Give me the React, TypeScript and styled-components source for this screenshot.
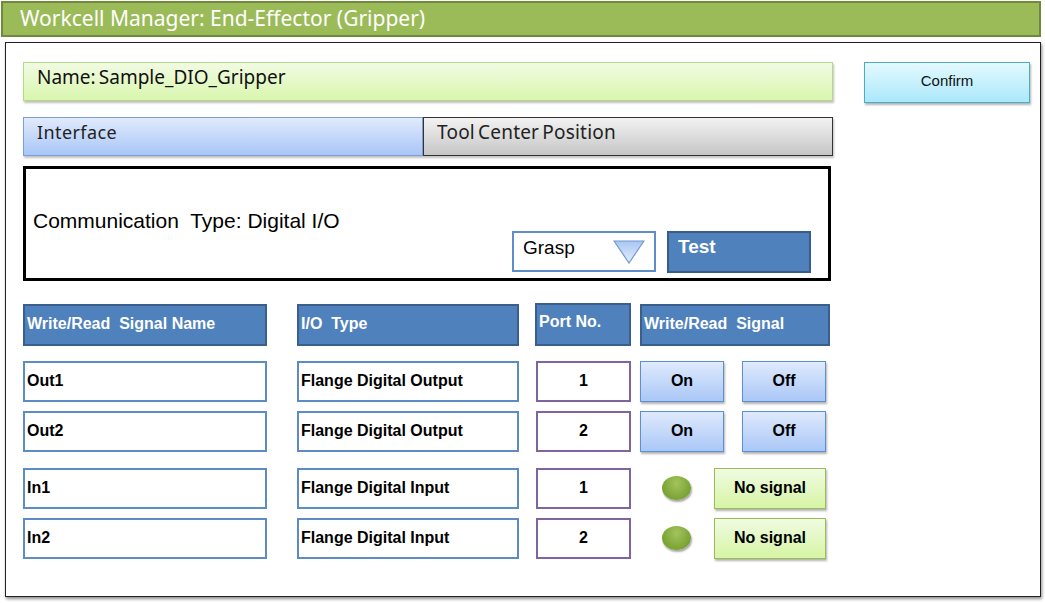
import React from 'react';
import styled, {createGlobalStyle} from 'styled-components';

const GlobalStyle = createGlobalStyle`
  html, body {
    margin: 0;
    padding: 0;
    background: #ffffff;
  }
  * {
    box-sizing: border-box;
  }
`

type SignalRow = {
    name: string
    ioType: string
    port: number
    kind: 'output' | 'input'
}

const rows: SignalRow[] = [
    {name: 'Out1', ioType: 'Flange Digital Output', port: 1, kind: 'output'},
    {name: 'Out2', ioType: 'Flange Digital Output', port: 2, kind: 'output'},
    {name: 'In1', ioType: 'Flange Digital Input', port: 1, kind: 'input'},
    {name: 'In2', ioType: 'Flange Digital Input', port: 2, kind: 'input'},
]

function App() {
    return (
        <Page>
            <GlobalStyle/>
            <TitleBar>Workcell Manager: End-Effector (Gripper)</TitleBar>
            <Panel>
                <MainColumn>
                    <NameBox>Name:&thinsp;Sample_DIO_Gripper</NameBox>
                    <Tabs>
                        <Tab $active>Interface</Tab>
                        <Tab>Tool Center Position</Tab>
                    </Tabs>
                    <CommBox>
                        <CommText>Communication&nbsp; Type: Digital I/O</CommText>
                        <CommControls>
                            <Dropdown>
                                Grasp
                                <svg width="32" height="24" viewBox="0 0 32 24">
                                    <defs>
                                        <linearGradient id="tri" x1="0" y1="0" x2="0" y2="1">
                                            <stop offset="0" stopColor="#a9c6f2"/>
                                            <stop offset="1" stopColor="#e4eefc"/>
                                        </linearGradient>
                                    </defs>
                                    <polygon points="1,1 31,1 16,23" fill="url(#tri)" stroke="#6f98d2"
                                             strokeWidth="1.2"/>
                                </svg>
                            </Dropdown>
                            <TestButton>Test</TestButton>
                        </CommControls>
                    </CommBox>
                    <Table>
                        <HeaderRow>
                            <HeadCell>Write/Read&nbsp; Signal Name</HeadCell>
                            <HeadCell>I/O&nbsp; Type</HeadCell>
                            <HeadCell $raised>Port No.</HeadCell>
                            <HeadCell>Write/Read&nbsp; Signal</HeadCell>
                        </HeaderRow>
                        <Group>
                            {rows.slice(0, 2).map(r => <Row key={r.name} r={r}/>)}
                        </Group>
                        <Group $second>
                            {rows.slice(2).map(r => <Row key={r.name} r={r}/>)}
                        </Group>
                    </Table>
                </MainColumn>
                <ConfirmButton>Confirm</ConfirmButton>
            </Panel>
        </Page>
    );
}

const Row = ({r}: { r: SignalRow }) => (
    <DataRow>
        <Cell>{r.name}</Cell>
        <Cell>{r.ioType}</Cell>
        <PortCell>{r.port}</PortCell>
        {r.kind === 'output' ? (
            <SignalArea>
                <BlueButton>On</BlueButton>
                <BlueButton>Off</BlueButton>
            </SignalArea>
        ) : (
            <SignalArea $input>
                <Led/>
                <NoSignal>No signal</NoSignal>
            </SignalArea>
        )}
    </DataRow>
)

export default App;

const Page = styled.div`
  width: 1045px;
  height: 603px;
  padding: 1px 4px 0 1px;
  font-family: "Liberation Sans", Arial, sans-serif;
`

const TitleBar = styled.div`
  height: 36px;
  background: #9bbb59;
  border: 2px solid #71893f;
  color: #ffffff;
  font-family: "Noto Sans", "Open Sans", sans-serif;
  font-size: 21px;
  line-height: 30px;
  padding-left: 17px;
`

const Panel = styled.div`
  margin: 5px 0 0 4px;
  height: 555px;
  border: 1px solid #222;
  box-shadow: 1px 2px 3px rgba(0, 0, 0, 0.45);
  display: flex;
  align-items: flex-start;
  padding: 19px 0 0 17px;
`

const MainColumn = styled.div`
  width: 810px;
  display: flex;
  flex-direction: column;
`

const NameBox = styled.div`
  height: 39px;
  background: linear-gradient(to bottom, #f1fbe3, #d9f6ad);
  border: 1px solid #b5d88a;
  box-shadow: 1px 2px 2px rgba(0, 0, 0, 0.25);
  font-family: "Noto Sans", "Open Sans", sans-serif;
  font-size: 19px;
  line-height: 28px;
  padding-left: 13px;
  color: #111;
`

const Tabs = styled.div`
  margin-top: 16px;
  display: flex;
  height: 39px;
`

const Tab = styled.div<{ $active?: boolean }>`
  flex: 0 0 ${p => p.$active ? 400 : 410}px;
  background: ${p => p.$active
          ? 'linear-gradient(to bottom, #e0eafc, #a9c6f7)'
          : 'linear-gradient(to bottom, #f2f2f2, #c6c6c6)'};
  border: 1px solid ${p => p.$active ? '#7d9fd3' : '#333'};
  box-shadow: 1px 2px 2px rgba(0, 0, 0, 0.25);
  font-family: "Noto Sans", "Open Sans", sans-serif;
  font-size: ${p => p.$active ? 18 : 19}px;
  line-height: 28px;
  padding-left: 13px;
  color: #222;
  letter-spacing: ${p => p.$active ? 0.4 : 0.2}px;
  word-spacing: ${p => p.$active ? 0 : -2}px;
`

const CommBox = styled.div`
  margin-top: 10px;
  width: 808px;
  height: 115px;
  border: 3px solid #000;
  position: relative;
  display: flex;
  align-items: center;
  padding-left: 7px;
`

const CommText = styled.div`
  font-size: 21px;
  color: #000;
  margin-top: -6px;
`

const CommControls = styled.div`
  position: absolute;
  left: 486px;
  top: 62px;
  display: flex;
  gap: 11px;
`

const Dropdown = styled.div`
  width: 144px;
  height: 41px;
  border: 2px solid #5f8dc8;
  background: #fff;
  display: flex;
  align-items: flex-start;
  justify-content: space-between;
  padding: 4px 9px 0 9px;
  font-size: 19px;
  color: #000;

  svg {
    margin-top: 3px;
  }
`

const TestButton = styled.div`
  width: 144px;
  height: 42px;
  background: #4f81bd;
  border: 2px solid #385d8a;
  color: #fff;
  font-weight: bold;
  font-size: 19px;
  padding: 3px 0 0 9px;
`

const Table = styled.div`
  margin-top: 22px;
  display: flex;
  flex-direction: column;
  gap: 15px;
`

const Group = styled.div<{ $second?: boolean }>`
  display: flex;
  flex-direction: column;
  gap: 9px;
  margin-top: ${p => p.$second ? 1 : 0}px;
`

const columns = `244px 30px 222px 16px 96px 9px 190px`

const HeaderRow = styled.div`
  display: grid;
  grid-template-columns: ${columns};
  grid-template-areas: "a . b . c . d";
  height: 43px;
  align-items: end;

  & > :nth-child(1) { grid-area: a; }
  & > :nth-child(2) { grid-area: b; }
  & > :nth-child(3) { grid-area: c; }
  & > :nth-child(4) { grid-area: d; }
`

const HeadCell = styled.div<{ $raised?: boolean }>`
  height: ${p => p.$raised ? 43 : 42}px;
  align-self: ${p => p.$raised ? 'start' : 'end'};
  background: #4f81bd;
  border: 2px solid #3a5f8c;
  color: #fff;
  font-weight: bold;
  font-size: 16px;
  display: flex;
  align-items: center;
  padding: 0 0 ${p => p.$raised ? 5 : 3}px 2px;
  white-space: nowrap;
`

const DataRow = styled.div`
  display: grid;
  grid-template-columns: ${columns};
  grid-template-areas: "a . b . c . d";
  height: 41px;

  & > :nth-child(1) { grid-area: a; }
  & > :nth-child(2) { grid-area: b; }
  & > :nth-child(3) { grid-area: c; }
  & > :nth-child(4) { grid-area: d; }
`

const Cell = styled.div`
  border: 2px solid #5d8cc4;
  background: #fff;
  font-weight: bold;
  font-size: 16px;
  color: #000;
  display: flex;
  align-items: center;
  padding: 0 0 2px 2px;
`

const PortCell = styled(Cell)`
  border-color: #8064a2;
  justify-content: center;
  padding: 0 0 2px 0;
  margin-left: 1px;
`

const SignalArea = styled.div<{ $input?: boolean }>`
  display: flex;
  align-items: center;
  justify-content: space-between;
  padding: ${p => p.$input ? '0 4px 0 22px' : '0 4px 0 0'};
`

const BlueButton = styled.div`
  width: 84px;
  height: 41px;
  background: linear-gradient(to bottom, #dfeafd, #aac7f6);
  border: 1px solid #5b8fd8;
  box-shadow: 1px 2px 2px rgba(0, 0, 0, 0.3);
  font-weight: bold;
  font-size: 16px;
  display: flex;
  align-items: center;
  justify-content: center;
  padding-bottom: 2px;
`

const Led = styled.div`
  width: 29px;
  height: 24px;
  border-radius: 50%;
  background: radial-gradient(ellipse at 50% 30%, #a4c45c, #77a032 75%);
  box-shadow: 1px 2px 2px rgba(0, 0, 0, 0.35);
  margin-bottom: 2px;
`

const NoSignal = styled.div`
  width: 112px;
  height: 41px;
  background: linear-gradient(to bottom, #f0fbe2, #d6f5a4);
  border: 1px solid #9bbb59;
  box-shadow: 1px 2px 2px rgba(0, 0, 0, 0.3);
  font-weight: bold;
  font-size: 16px;
  display: flex;
  align-items: center;
  justify-content: center;
  padding-bottom: 2px;
`

const ConfirmButton = styled.div`
  margin-left: 31px;
  width: 166px;
  height: 41px;
  background: linear-gradient(to bottom, #e4f9fe, #aae8fb);
  border: 1px solid #4bacc6;
  box-shadow: 1px 2px 2px rgba(0, 0, 0, 0.3);
  font-size: 15px;
  color: #111;
  display: flex;
  align-items: center;
  justify-content: center;
  padding-bottom: 4px;
`
